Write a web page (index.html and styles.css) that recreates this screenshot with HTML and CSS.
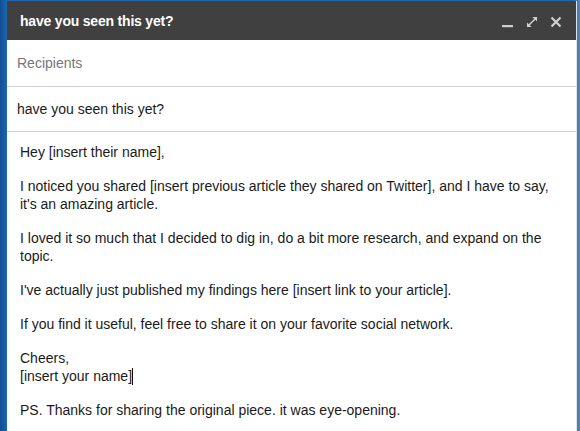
FILE: index.html
```html
<!DOCTYPE html>
<html>
<head>
<meta charset="utf-8">
<link rel="stylesheet" href="styles.css">
</head>
<body>
<div class="desk">
  <div class="compose">
    <div class="header">
      <span class="title">have you seen this yet?</span>
      <div class="controls">
        <svg class="icon" width="12" height="12" viewBox="0 0 12 12"><rect x="0" y="9" width="11" height="2.2" fill="#cfcfcf"/></svg>
        <svg class="icon" width="12" height="12" viewBox="0 0 12 12"><g fill="#cfcfcf"><path d="M6.5 1 H11 V5.5 L9.3 3.8 L6.6 6.5 L5.5 5.4 L8.2 2.7 Z"/><path d="M5.5 11 H1 V6.5 L2.7 8.2 L5.4 5.5 L6.5 6.6 L3.8 9.3 Z"/></g></svg>
        <svg class="icon" width="12" height="12" viewBox="0 0 12 12"><path d="M1.5 1.5 L10.5 10.5 M10.5 1.5 L1.5 10.5" stroke="#cfcfcf" stroke-width="2.2"/></svg>
      </div>
    </div>
    <div class="field recipients">Recipients</div>
    <div class="field subject">have you seen this yet?</div>
    <div class="body">
      <p>Hey [insert their name],</p>
      <p>I noticed you shared [insert previous article they shared on Twitter], and I have to say, it's an amazing article.</p>
      <p>I loved it so much that I decided to dig in, do a bit more research, and expand on the topic.</p>
      <p>I've actually just published my findings here [insert link to your article].</p>
      <p>If you find it useful, feel free to share it on your favorite social network.</p>
      <p>Cheers,<br>[insert your name]<span class="caret"></span></p>
      <p>PS. Thanks for sharing the original piece. it was eye-opening.</p>
    </div>
  </div>
</div>
</body>
</html>
```

FILE: styles.css
```css
html, body {
  margin: 0;
  padding: 0;
  width: 580px;
  height: 431px;
  overflow: hidden;
}
body {
  font-family: "Liberation Sans", Arial, sans-serif;
  background: linear-gradient(90deg, #0e4f94 0px, #1f66ac 7px, #1f66ac 573px, #5b88b4 580px);
}
.desk {
  padding: 1px 3px 0 7px;
  height: 431px;
  box-sizing: border-box;
}
.compose {
  background: #fff;
  height: 100%;
  border-right: 1px solid #e0e6ee;
}
.header {
  height: 39px;
  background: #404040;
  display: flex;
  align-items: center;
  justify-content: space-between;
  padding: 0 14px 0 13px;
}
.title {
  color: #fff;
  font-weight: bold;
  font-size: 14px;
  letter-spacing: -0.2px;
}
.controls {
  display: flex;
  gap: 12px;
  align-items: center;
  margin-top: 2px;
}
.field {
  font-size: 14px;
  padding: 0 10px;
  display: flex;
  align-items: center;
  border-bottom: 1px solid #cfcfcf;
}
.recipients {
  height: 46px;
  color: #777;
}
.subject {
  height: 44px;
  color: #1a1a1a;
}
.body {
  padding: 11px 13px 0 13px;
  font-size: 14px;
  line-height: 18px;
  color: #1a1a1a;
}
.body p {
  margin: 0 0 16px 0;
}
.caret {
  display: inline-block;
  width: 1px;
  height: 17px;
  background: #111;
  vertical-align: -4px;
}
```
